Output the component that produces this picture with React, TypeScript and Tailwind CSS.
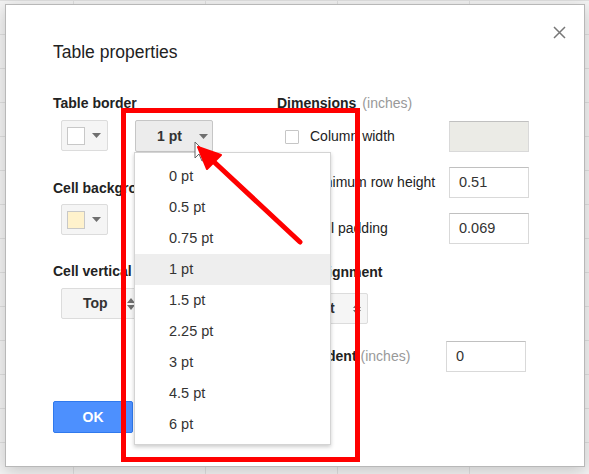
const font = { fontFamily: '"Liberation Sans", Arial, sans-serif' };

const sizes = ["0 pt", "0.5 pt", "0.75 pt", "1 pt", "1.5 pt", "2.25 pt", "3 pt", "4.5 pt", "6 pt"];

function Caret() {
  return (
    <svg width="9" height="5" viewBox="0 0 9 5" className="shrink-0">
      <path d="M0 0h9L4.5 5z" fill="#6f6f6f" />
    </svg>
  );
}

function UpDown() {
  return (
    <svg width="8" height="12" viewBox="0 0 8 12" className="shrink-0">
      <path d="M0 5L4 0l4 5z M0 7h8l-4 5z" fill="#6f6f6f" />
    </svg>
  );
}

function SwatchButton({ fill }: { fill: string }) {
  return (
    <div className="flex h-[31px] w-[47px] items-center rounded-[2px] border border-[#dcdcdc] bg-[#f5f5f5] pl-[5px]">
      <div className="h-[18px] w-[18px] border border-[#c8c8c8]" style={{ background: fill }} />
      <div className="ml-[7px]">
        <Caret />
      </div>
    </div>
  );
}

function TextBox({ value, disabled }: { value?: string; disabled?: boolean }) {
  return (
    <div
      className={`flex h-[31px] w-[80px] items-center border border-[#d9d9d9] border-t-[#c0c0c0] pl-[9px] text-[14.5px] text-[#333] ${
        disabled ? "bg-[#ebebe6]" : "bg-white"
      }`}
    >
      {value}
    </div>
  );
}

export default function App() {
  return (
    <div
      className="relative h-[474px] w-[589px] overflow-hidden bg-[#f4f4f4] bg-[linear-gradient(to_right,#e0e0e0_1px,transparent_1px),linear-gradient(to_bottom,#e0e0e0_1px,transparent_1px)] bg-size-[132px_34px] bg-position-[73px_0px] pl-[5px] pt-[4px]"
      style={font}
    >
      {/* dialog */}
      <div className="relative h-[463px] w-[580px] border border-[#b8b8b8] bg-white pl-[47px] pt-[37px] shadow-[0_4px_16px_rgba(0,0,0,0.2)]">
        <div className="text-[17.5px] leading-[20px] text-[#222]">Table properties</div>

        <svg className="absolute left-[547px] top-[21px]" width="13" height="13" viewBox="0 0 13 13">
          <path d="M1 1l11 11M12 1L1 12" stroke="#777" strokeWidth="1.5" />
        </svg>

        <div className="mt-[33px] flex text-[14px] text-[#222]">
          {/* left column */}
          <div className="flex w-[224px] flex-col">
            <div className="h-[16px] font-bold leading-[16px]">Table border</div>
            <div className="mt-[9px] flex items-start pl-[8px]">
              <SwatchButton fill="#fff" />
              <div className="relative ml-[27px]">
                <div className="flex h-[32px] w-[78px] items-center rounded-[2px] border border-[#c6c6c6] bg-[#ececec] pl-[21px] pr-[4px]">
                  <span className="font-bold text-[#333]">1 pt</span>
                  <span className="ml-auto">
                    <Caret />
                  </span>
                </div>
                {/* open menu */}
                <div className="absolute left-[-1px] top-full z-10 h-[293px] w-[197px] border border-[#d4d4d4] bg-white py-[8px] shadow-[0_2px_4px_rgba(0,0,0,0.2)]">
                  {sizes.map((s) => (
                    <div
                      key={s}
                      className={`flex h-[31px] items-center pl-[34px] text-[14.5px] text-[#333] ${
                        s === "1 pt" ? "bg-[#eeeeee]" : ""
                      }`}
                    >
                      {s}
                    </div>
                  ))}
                </div>
              </div>
            </div>

            <div className="mt-[28px] h-[16px] font-bold leading-[16px]">Cell background color</div>
            <div className="mt-[8px] pl-[8px]">
              <SwatchButton fill="#fff2cc" />
            </div>

            <div className="mt-[28px] h-[16px] font-bold leading-[16px]">Cell vertical alignment</div>
            <div className="mt-[9px] pl-[8px]">
              <div className="flex h-[31px] w-[82px] items-center rounded-[2px] border border-[#dcdcdc] bg-[#f5f5f5] pl-[21px] pr-[7px]">
                <span className="font-bold text-[#333]">Top</span>
                <span className="ml-auto">
                  <UpDown />
                </span>
              </div>
            </div>

            <div className="mt-[82px] flex h-[32px] w-[80px] items-center justify-center rounded-[2px] border border-[#3079ed] bg-[#4d90fe] font-bold text-white">
              OK
            </div>
          </div>

          {/* right column */}
          <div className="flex flex-col">
            <div className="h-[16px] leading-[16px]">
              <span className="font-bold">Dimensions</span>
              <span className="ml-[6px] text-[#999]">(inches)</span>
            </div>

            <div className="mt-[10px] flex items-center pl-[8px]">
              <div className="flex w-[164px] items-center">
                <div className="mt-[1px] h-[14px] w-[14px] rounded-[1px] border border-[#c6c6c6] bg-white" />
                <span className="ml-[11px]">Column width</span>
              </div>
              <TextBox disabled />
            </div>

            <div className="mt-[15px] flex items-center pl-[33px]">
              <span className="w-[139px]">Minimum row height</span>
              <TextBox value="0.51" />
            </div>

            <div className="mt-[15px] flex items-center pl-[33px]">
              <span className="w-[139px]">Cell padding</span>
              <TextBox value="0.069" />
            </div>

            <div className="mt-[20px] h-[16px] font-bold leading-[16px]">Table alignment</div>
            <div className="mt-[13px] pl-[8px]">
              <div className="flex h-[31px] w-[83px] items-center rounded-[2px] border border-[#dcdcdc] bg-[#f5f5f5] pl-[23px] pr-[6px]">
                <span className="font-bold text-[#333]">Left</span>
                <span className="ml-auto">
                  <UpDown />
                </span>
              </div>
            </div>

            <div className="mt-[17px] flex items-center pl-[8px]">
              <span className="w-[161px]">
                <span className="font-bold">Left indent</span>
                <span className="ml-[4px] text-[#999]">(inches)</span>
              </span>
              <TextBox value="0" />
            </div>
          </div>
        </div>
      </div>

      {/* mouse pointer */}
      <svg className="absolute left-[194px] top-[141px] z-20" width="13" height="21" viewBox="0 0 13 21">
        <path d="M1 1v16l4-4 3 7 2.5-1-3-7H12z" fill="#fff" stroke="#666" strokeWidth="1" strokeLinejoin="round" />
      </svg>

      {/* red annotation arrow */}
      <svg className="pointer-events-none absolute left-0 top-0 z-30" width="589" height="474" viewBox="0 0 589 474">
        <line x1="300" y1="242" x2="212" y2="160" stroke="#f00" strokeWidth="5" strokeLinecap="round" />
        <path d="M198 147L221 155L207 169z" fill="#f00" stroke="#f00" strokeWidth="2" strokeLinejoin="round" />
      </svg>

      {/* red highlight box */}
      <div className="pointer-events-none absolute left-[121px] top-[108px] z-30 h-[354px] w-[239px] border-[5px] border-[#f00]" />
    </div>
  );
}
